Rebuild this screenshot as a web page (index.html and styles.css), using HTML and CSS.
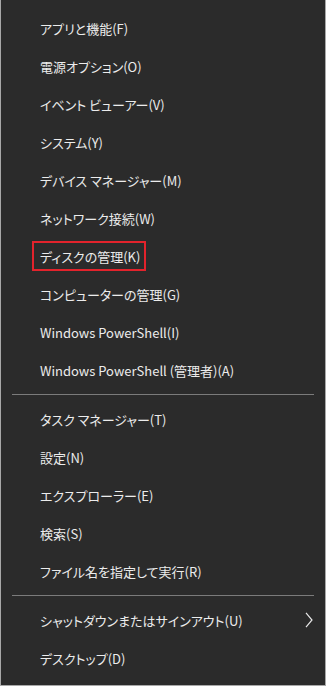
FILE: index.html
```html
<!DOCTYPE html>
<html lang="ja">
<head>
<meta charset="utf-8">
<link rel="stylesheet" href="styles.css">
</head>
<body>
<div class="menu">
  <ul class="group">
    <li class="item">アプリと機能(F)</li>
    <li class="item">電源オプション(O)</li>
    <li class="item">イベント ビューアー(V)</li>
    <li class="item">システム(Y)</li>
    <li class="item">デバイス マネージャー(M)</li>
    <li class="item">ネットワーク接続(W)</li>
    <li class="item highlighted">ディスクの管理(K)</li>
    <li class="item">コンピューターの管理(G)</li>
    <li class="item">Windows PowerShell(I)</li>
    <li class="item">Windows PowerShell (管理者)(A)</li>
  </ul>
  <div class="sep"></div>
  <ul class="group">
    <li class="item">タスク マネージャー(T)</li>
    <li class="item">設定(N)</li>
    <li class="item">エクスプローラー(E)</li>
    <li class="item">検索(S)</li>
    <li class="item">ファイル名を指定して実行(R)</li>
  </ul>
  <div class="sep"></div>
  <ul class="group">
    <li class="item submenu">シャットダウンまたはサインアウト(U)
      <svg class="chev" width="8" height="16" viewBox="0 0 8 16"><path d="M1 0.8 L7 8 L1 15.2" fill="none" stroke="#e8e8e8" stroke-width="1.2"/></svg>
    </li>
    <li class="item">デスクトップ(D)</li>
  </ul>
</div>
</body>
</html>
```
FILE: styles.css
```css
html, body {
  margin: 0;
  padding: 0;
  background: #2b2b2b;
}
.menu {
  width: 326px;
  height: 686px;
  box-sizing: border-box;
  background: #2b2b2b;
  border-left: 1px solid #a8a8a8;
  border-right: 1px solid #a8a8a8;
  border-bottom: 1px solid #a8a8a8;
  padding: 9px 0 8px;
  font-family: "Noto Sans CJK JP", "Noto Sans", sans-serif;
  font-size: 13px;
  font-feature-settings: "palt";
  color: #ececec;
}
.group {
  list-style: none;
  margin: 0;
  padding: 0;
}
.item {
  height: 38px;
  display: flex;
  align-items: center;
  padding-left: 39px;
  padding-right: 12px;
  white-space: nowrap;
  position: relative;
}
.submenu {
  justify-content: space-between;
}
.chev {
  display: block;
}
.sep {
  height: 1px;
  background: #7b7b7b;
  margin: 5px 11px 5px 11px;
}
.highlighted::before {
  content: "";
  position: absolute;
  left: 31px;
  top: 4px;
  width: 110px;
  height: 26px;
  border: 2px solid #e3232c;
}
```
